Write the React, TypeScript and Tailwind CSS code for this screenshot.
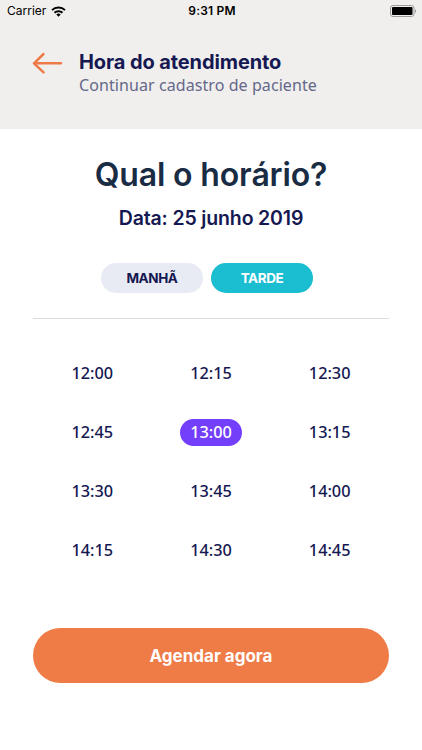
import { useState } from 'react';
import clsx from 'clsx';

const times = [
  '12:00', '12:15', '12:30',
  '12:45', '13:00', '13:15',
  '13:30', '13:45', '14:00',
  '14:15', '14:30', '14:45',
];

function StatusBar() {
  return (
    <div className="grid h-[22px] grid-cols-3 items-center pl-[7px] pr-[5px] text-black font-['Inter',sans-serif]">
      <div className="flex items-center gap-[5px]">
        <span className="text-[12px] leading-none">Carrier</span>
        <svg width="15" height="11" viewBox="0 0 15 11" fill="none" stroke="currentColor" strokeWidth="2">
          <path d="M1 4.1a9.2 9.2 0 0 1 13 0" />
          <path d="M3.5 6.8a5.7 5.7 0 0 1 8 0" />
          <path d="M7.5 10.7 5.3 8.5a3.1 3.1 0 0 1 4.4 0z" fill="currentColor" stroke="none" />
        </svg>
      </div>
      <span className="text-center text-[12px] leading-none font-semibold tracking-[0.2px]">9:31 PM</span>
      <svg className="justify-self-end" width="27" height="12" viewBox="0 0 27 12">
        <rect x="0.5" y="0.5" width="23.5" height="11" rx="2.5" fill="none" stroke="#9b9b9b" />
        <rect x="2" y="2" width="20.5" height="8" rx="1" fill="#000" />
        <path d="M25 4.2c1.6.5 1.6 3.1 0 3.6z" fill="#9b9b9b" />
      </svg>
    </div>
  );
}

function Header() {
  return (
    <header className="h-[129px] bg-[#f0efed]">
      <StatusBar />
      <div className="flex items-start pl-8 pt-[27px]">
        <button aria-label="Voltar" className="mt-[3px] mr-4 w-[31px]">
          <svg width="31" height="22" viewBox="0 0 31 22" fill="none" stroke="#ee7b47" strokeWidth="2.5" strokeLinecap="round" strokeLinejoin="round">
            <path d="M29 11.3H2M11.5 2 2 11.3l9.5 9" />
          </svg>
        </button>
        <div>
          <h2 className="text-[20px] leading-[26px] font-bold tracking-[-0.1px] text-[#151851] font-['Inter',sans-serif]">
            Hora do atendimento
          </h2>
          <p className="-mt-px text-[16px] leading-[22px] tracking-[0.08px] text-[#64688a]">Continuar cadastro de paciente</p>
        </div>
      </div>
    </header>
  );
}

export default function App() {
  const [period, setPeriod] = useState('TARDE');
  const [selected, setSelected] = useState('13:00');

  return (
    <div className="h-[750px] w-[422px] overflow-hidden bg-white font-['Noto_Sans',sans-serif]">
      <Header />

      <main className="px-[33px] pt-[26px]">
        <div className="text-center font-['Inter',sans-serif]">
          <h1 className="text-[32px] leading-[40px] font-semibold tracking-[-0.15px] whitespace-nowrap text-[#192c44]">
            Qual o horário?
          </h1>
          <p className="mt-[10px] text-[19.5px] leading-[26px] font-semibold tracking-[-0.15px] whitespace-nowrap text-[#151851]">
            Data: 25 junho 2019
          </p>
        </div>

        {/* Period toggle */}
        <div className="mt-8 flex justify-center gap-2 pr-2 font-['Inter',sans-serif]">
          {['MANHÃ', 'TARDE'].map((p) => (
            <button
              key={p}
              onClick={() => setPeriod(p)}
              className={clsx(
                'h-[30px] w-[102px] rounded-full pt-[2px] text-[13.5px] leading-none font-bold tracking-[-0.4px]',
                p === period ? 'bg-[#1bbdd1] text-white' : 'bg-[#e8ebf4] text-[#151851]'
              )}
            >
              {p}
            </button>
          ))}
        </div>

        <hr className="mt-[25px] border-[#dcdcdf]" />

        {/* Time slots */}
        <div className="mt-[25px] grid grid-cols-3">
          {times.map((time) => (
            <div key={time} className="flex h-[59px] items-center justify-center">
              <button
                onClick={() => setSelected(time)}
                className={clsx(
                  'h-[27px] w-[62px] rounded-full text-[16.3px] leading-none font-medium',
                  time === selected ? 'bg-[#743ffb] text-white' : 'text-[#151851]'
                )}
              >
                {time}
              </button>
            </div>
          ))}
        </div>

        <button className="mt-[48px] h-[55px] w-full rounded-full bg-[#ef7b47] pt-[2px] text-[17px] font-bold text-white font-['Inter',sans-serif]">
          Agendar agora
        </button>
      </main>
    </div>
  );
}
